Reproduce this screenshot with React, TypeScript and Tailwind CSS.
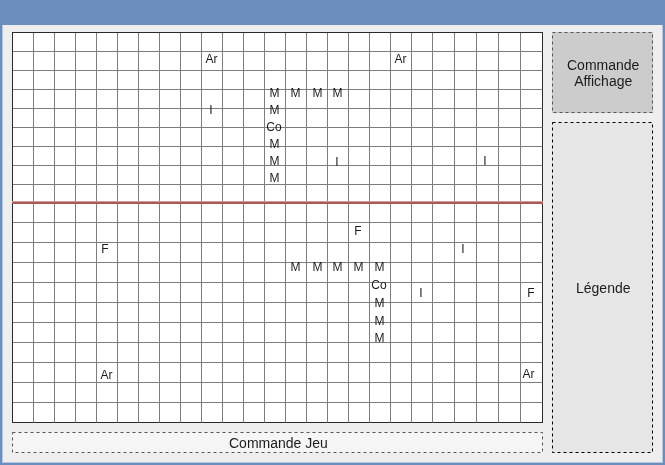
const columns = [
  ...Array.from({ length: 20 }, () => "w-[21px]"),
  ...Array.from({ length: 5 }, () => "w-[22px]"),
];

const rows = [
  ...Array.from({ length: 10 }, () => "h-[19px]"),
  ...Array.from({ length: 10 }, () => "h-[20px]"),
];

type Piece = { label: string; x: number; y: number };

// Centre of every piece, measured from the board's top left corner.
const pieces: Piece[] = [
  { label: "Ar", x: 198.5, y: 26 },
  { label: "Ar", x: 387.5, y: 26 },
  { label: "M", x: 261.5, y: 60 },
  { label: "M", x: 282.5, y: 60 },
  { label: "M", x: 304.5, y: 60 },
  { label: "M", x: 324.5, y: 60 },
  { label: "I", x: 198, y: 77 },
  { label: "M", x: 261.5, y: 77 },
  { label: "Co", x: 261, y: 94 },
  { label: "M", x: 261.5, y: 111 },
  { label: "M", x: 261.5, y: 128 },
  { label: "I", x: 324, y: 129 },
  { label: "I", x: 472, y: 128 },
  { label: "M", x: 261.5, y: 145 },
  { label: "F", x: 345, y: 198 },
  { label: "F", x: 92, y: 216 },
  { label: "I", x: 450, y: 216 },
  { label: "M", x: 282.5, y: 234 },
  { label: "M", x: 304.5, y: 234 },
  { label: "M", x: 324.5, y: 234 },
  { label: "M", x: 345.5, y: 234 },
  { label: "M", x: 366.5, y: 234 },
  { label: "Co", x: 366, y: 252 },
  { label: "I", x: 408, y: 260 },
  { label: "F", x: 518, y: 260 },
  { label: "M", x: 366.5, y: 270 },
  { label: "M", x: 366.5, y: 288 },
  { label: "M", x: 366.5, y: 305 },
  { label: "Ar", x: 93.5, y: 342 },
  { label: "Ar", x: 515.5, y: 341 },
];

function Board() {
  return (
    <div className="relative h-[391px] w-[531px] border-t border-l border-[#2a2a2a] bg-white">
      {rows.map((height, r) => (
        <div key={r} className="flex">
          {columns.map((width, c) => (
            <div
              key={c}
              className={`${height} ${width} shrink-0 border-r border-b ${
                c === columns.length - 1 ? "border-r-[#2a2a2a]" : "border-r-[#7d7d7d]"
              } ${r === rows.length - 1 ? "border-b-[#2a2a2a]" : "border-b-[#7d7d7d]"}`}
            />
          ))}
        </div>
      ))}
      <div className="absolute top-[168px] -left-px h-[3px] w-[531px] border-t border-[#cf9c97] bg-[#ac5a56]" />
      <div className="absolute inset-0 will-change-transform">
        {pieces.map(({ label, x, y }, i) => (
          <span
            key={i}
            className="absolute -translate-x-1/2 -translate-y-1/2 text-[12px] leading-[14px] text-[#1c1c1c]"
            style={{ left: x, top: y }}
          >
            {label}
          </span>
        ))}
      </div>
    </div>
  );
}

// Outline with an even three-on, three-off dash.
function DashedOutline({ width, height, color }: { width: number; height: number; color: string }) {
  return (
    <svg className="absolute inset-0" width={width} height={height} fill="none" aria-hidden="true">
      <rect
        x="0.5"
        y="0.5"
        width={width - 1}
        height={height - 1}
        stroke={color}
        strokeDasharray="3 3"
      />
    </svg>
  );
}

export default function App() {
  return (
    <div className="flex h-[465px] w-[665px] flex-col bg-[#6c8ebf] pt-[25px] pr-[2px] pb-[2px] pl-[2px] font-['Liberation_Sans',Arial,sans-serif] text-[#1c1c1c]">
      <div className="flex flex-1 gap-[9px] border-r border-b border-l border-[#b4c6e2] bg-[#eeeeee] pt-[7px] pl-[9px]">
        <div className="flex flex-col gap-[9px]">
          <Board />
          <div className="relative flex h-[21px] w-[531px] items-center justify-center bg-[#f5f5f5] pt-[2px] pl-px text-[14px] leading-[17px]">
            <DashedOutline width={531} height={21} color="#555555" />
            <span className="will-change-transform">Commande Jeu</span>
          </div>
        </div>
        <div className="flex flex-col gap-[9px] text-center text-[14px] leading-[16px]">
          <div className="relative flex h-[81px] w-[101px] items-center justify-center bg-[#cccccc] pl-px">
            <DashedOutline width={101} height={81} color="#555555" />
            <p className="will-change-transform">
              Commande
              <br />
              Affichage
            </p>
          </div>
          <div className="relative flex h-[331px] w-[101px] items-center justify-center bg-[#e6e6e6] pl-px">
            <DashedOutline width={101} height={331} color="#000000" />
            <span className="will-change-transform">Légende</span>
          </div>
        </div>
      </div>
    </div>
  );
}
